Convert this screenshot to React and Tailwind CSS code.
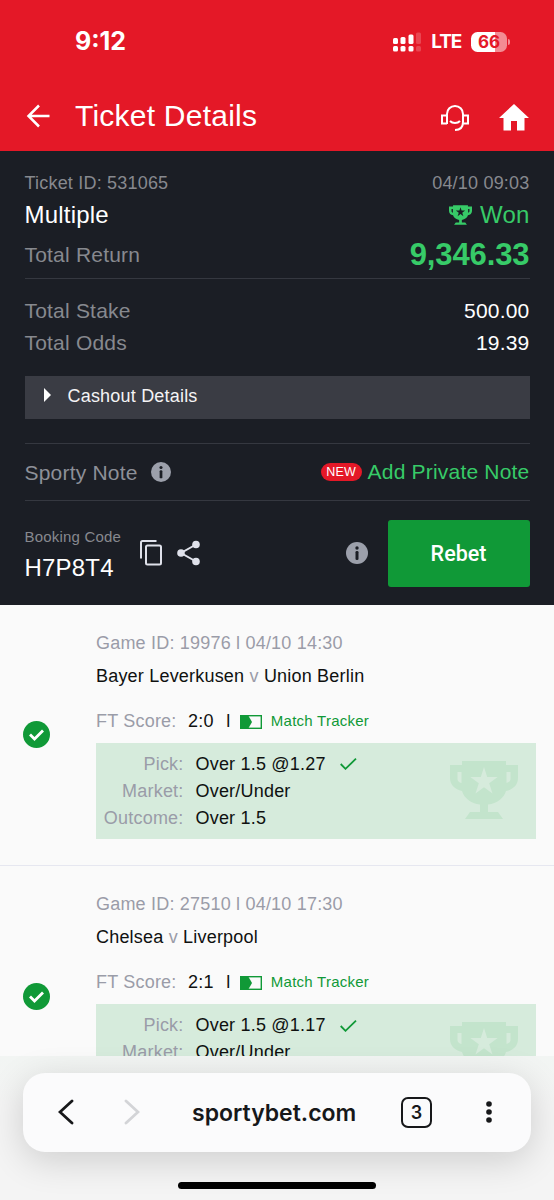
import React from "react";

const matches = [
    { id: "19976", time: "04/10 14:30", home: "Bayer Leverkusen", away: "Union Berlin", score: "2:0", odds: "1.27" },
    { id: "27510", time: "04/10 17:30", home: "Chelsea", away: "Liverpool", score: "2:1", odds: "1.17" },
];

const Trophy = ({ className }) => (
    <svg viewBox="0 0 68 58" className={className} fill="currentColor" fillRule="evenodd">
        <path d="M12 0H56V4H68V17C68 24 63 28.500 56 30C54 37 47 42.500 38 43.500V51H48L53 58H15L20 51H30V43.500C21 42.500 14 37 12 30C5 28.500 0 24 0 17V4H12ZM7.500 11V18C7.500 20 9 21.500 11.500 22V11ZM60.500 11H56.500V22C59 21.500 60.500 20 60.500 18ZM34 6L30.800 16H20.300L28.800 22.300L25.500 32.500L34 26.200L42.500 32.500L39.200 22.300L47.700 16H37.200Z" />
    </svg>
);

const InfoIcon = ({ className }) => (
    <svg viewBox="0 0 22 22" className={className}>
        <circle cx="11" cy="11" r="11" fill="#9ca0ab" />
        <rect x="9.500" y="9" width="3" height="9" rx="1.300" fill="#1b1e25" />
        <circle cx="11" cy="6" r="1.700" fill="#1b1e25" />
    </svg>
);

const StatusBar = () => (
    <div className="flex h-[83px] items-center pl-[75px] pr-[44px] font-['Inter'] text-white">
        <span className="text-[25px] font-bold leading-none">9:12</span>
        <svg viewBox="0 0 28 20" className="ml-auto h-[20px] w-[28px]" fill="#fff">
            <rect x="0" y="6" width="5" height="6" rx="1.500" />
            <rect x="7.500" y="5" width="5" height="7" rx="1.500" />
            <rect x="15.500" y="2.500" width="5" height="9.500" rx="1.500" />
            <rect x="23" y="0.500" width="5" height="11.500" rx="1.500" opacity="0.2" />
            <rect x="0" y="14" width="5" height="5.500" rx="1.500" />
            <rect x="7.500" y="14" width="5" height="5.500" rx="1.500" />
            <rect x="15.500" y="14" width="5" height="5.500" rx="1.500" />
            <rect x="23" y="14" width="5" height="5.500" rx="1.500" opacity="0.2" />
        </svg>
        <span className="ml-[10px] text-[19px] font-bold leading-none tracking-[-1.200px]">LTE</span>
        <div className="ml-[10px] flex items-center">
            <div className="flex h-[20px] w-[36px] items-center justify-center rounded-[6.500px] bg-[linear-gradient(90deg,#fff_68%,#f38c93_68%)] pt-px text-[17px] font-bold leading-none text-[#e41827]">
                66
            </div>
            <div className="ml-px h-[6px] w-[2px] rounded-r-full bg-[#f38c93]" />
        </div>
    </div>
);

const Header = () => (
    <header className="h-[151px] bg-[#e41827]">
        <StatusBar />
        <div className="flex h-[66px] items-center pl-[26px] pr-[25px] text-white">
            <svg viewBox="0 0 24 24" className="h-[24px] w-[24px]" fill="none" stroke="#fff" strokeWidth="2.500">
                <path d="M23.500 12H2.500M13 1.500L2.500 12L13 22.500" />
            </svg>
            <h1 className="ml-[25px] text-[30px] leading-none tracking-[0.230px]">Ticket Details</h1>
            <svg viewBox="0 0 28 28" className="mt-[4px] ml-auto h-[28px] w-[28px]" fill="none" stroke="#fff" strokeWidth="2">
                <path d="M6 20V10C6 5.500 9.500 2 14 2S22 5.500 22 10V18C22 23 19 26 14 26" />
                <path d="M6 11.500H1V19.500H6M22 11.500H27V19.500H22M9 17C11.500 19.700 16.500 19.700 19 17" />
            </svg>
            <svg viewBox="0 0 30 27" className="mt-[2px] ml-[30px] h-[27px] w-[30px]" fill="#fff">
                <path d="M15 0L30 14H25.500V26.500H18V17H12V26.500H4.500V14H0Z" />
            </svg>
        </div>
    </header>
);

const TicketSummary = () => (
    <section className="h-[453.500px] bg-[#1b1e25] px-[24.500px] pt-[20px] tracking-[0.200px] text-[#87898f]">
        <div className="flex h-[24px] items-center justify-between text-[18px]">
            <span>Ticket ID: 531065</span>
            <span>04/10 09:03</span>
        </div>
        <div className="flex h-[39px] items-center justify-between text-[24px]">
            <span className="text-white">Multiple</span>
            <span className="flex items-center gap-[8px] text-[#37cb68]">
                <Trophy className="h-[20px] w-[23px]" />
                Won
            </span>
        </div>
        <div className="flex h-[45px] items-center justify-between border-b border-[#353840] pb-[2px] text-[21px]">
            <span>Total Return</span>
            <span className="text-[31px] font-bold tracking-[-0.100px] text-[#37cb68]">9,346.33</span>
        </div>
        <div className="mt-[16px] flex h-[32px] items-center justify-between text-[21px]">
            <span>Total Stake</span>
            <span className="text-white">500.00</span>
        </div>
        <div className="flex h-[32px] items-center justify-between text-[21px]">
            <span>Total Odds</span>
            <span className="text-white">19.39</span>
        </div>
        <div className="mt-[17px] flex h-[43px] items-center bg-[#3a3c44] pb-[3px] pl-[19px] text-[18px] text-[#f4f4f5]">
            <svg viewBox="0 0 7 14" className="mb-[2px] h-[14px] w-[7px]" fill="#fff">
                <path d="M0 0L7 7L0 14Z" />
            </svg>
            <span className="ml-[17px]">Cashout Details</span>
        </div>
        <div className="mt-[24px] flex h-[58px] items-center border-y border-[#353840] text-[21px]">
            <span className="pt-px text-[#8d9098]">Sporty Note</span>
            <InfoIcon className="ml-[13px] h-[20px] w-[20px]" />
            <span className="ml-auto flex h-[18px] w-[41px] items-center justify-center rounded-full bg-[#e41827] text-[12.500px] text-white">NEW</span>
            <span className="ml-[6px] text-[#37cb68]">Add Private Note</span>
        </div>
        <div className="flex items-center pt-[18.500px]">
            <div className="flex w-[115.500px] flex-col">
                <span className="h-[30px] text-[15px] leading-[30px]">Booking Code</span>
                <span className="h-[32px] text-[24px] leading-[32px] text-white">H7P8T4</span>
            </div>
            <svg viewBox="0 0 22 26" className="h-[26px] w-[22px]" fill="none" stroke="#dfe1ea" strokeWidth="2">
                <path d="M1 18.500V2.500Q1 1 2.500 1H16.500" />
                <rect x="6" y="5.500" width="15" height="19" rx="1.500" />
            </svg>
            <svg viewBox="0 0 23 26" className="ml-[15px] h-[26px] w-[23px]" fill="#dfe1ea">
                <path d="M19 4.500L4 13L19 21.500" fill="none" stroke="#dfe1ea" strokeWidth="2" />
                <circle cx="19" cy="4.500" r="3.800" />
                <circle cx="4" cy="13" r="3.800" />
                <circle cx="19" cy="21.500" r="3.800" />
            </svg>
            <InfoIcon className="ml-auto h-[22px] w-[22px]" />
            <button className="ml-[20px] h-[67px] w-[142px] rounded-[3px] bg-[#109937] pt-[2px] font-['Roboto'] text-[21.500px] font-medium tracking-normal text-white">Rebet</button>
        </div>
    </section>
);

const PickRow = ({ label, children }) => (
    <div className="flex h-[27px] items-center">
        <span className="w-[87.500px] text-right text-[#9a9ca8]">{label}:</span>
        <span className="ml-[12px] flex items-center text-[#0f1110]">{children}</span>
    </div>
);

const MatchCard = ({ match }) => (
    <article className="flex h-[261.500px] items-center border-b border-[#e6e7f0] pl-[23px] pr-[18px] text-[18px] tracking-[0.200px]">
        <svg viewBox="0 0 27 27" className="h-[27px] w-[27px] shrink-0">
            <circle cx="13.500" cy="13.500" r="13.500" fill="#109937" />
            <path d="M7 13.500L11.500 18L20 9.500" fill="none" stroke="#fff" strokeWidth="2.800" />
        </svg>
        <div className="ml-[46px] h-full grow pt-[25px]">
            <div className="h-[26px] leading-[26px] text-[#9a9ca8]">
                Game ID: {match.id} l {match.time}
            </div>
            <div className="mt-[7px] h-[26px] leading-[26px] text-[#0f1110]">
                {match.home} <span className="text-[#9a9ca8]">v</span> {match.away}
            </div>
            <div className="mt-[19.500px] flex h-[26px] items-center text-[#0f1110]">
                <span className="text-[#9a9ca8]">FT Score:</span>
                <span className="ml-[11.500px]">{match.score}</span>
                <span className="ml-[12.500px]">l</span>
                <svg viewBox="0 0 22 14" className="mt-px ml-[9.500px] h-[14px] w-[22px]">
                    <rect x="0.700" y="0.700" width="20.600" height="12.600" fill="none" stroke="#109937" strokeWidth="1.400" />
                    <path d="M0 0H8L12 7L8 14H0Z" fill="#109937" />
                </svg>
                <span className="ml-[9px] text-[15px] tracking-[0.250px] text-[#109937]">Match Tracker</span>
            </div>
            <div className="mt-[8.500px] flex h-[96px] items-start justify-between bg-[#d6ebdc] pr-[18px] pt-[8px]">
                <div>
                    <PickRow label="Pick">
                        Over 1.5 @{match.odds}
                        <svg viewBox="0 0 17 12" className="ml-[14px] h-[12px] w-[17px]" fill="none" stroke="#109937" strokeWidth="1.800">
                            <path d="M0.700 6L5.500 10.800L16 0.700" />
                        </svg>
                    </PickRow>
                    <PickRow label="Market">Over/Under</PickRow>
                    <PickRow label="Outcome">Over 1.5</PickRow>
                </div>
                <Trophy className="mt-[10px] h-[58px] w-[68px] text-[#c3e4cc]" />
            </div>
        </div>
    </article>
);

const BrowserBar = () => (
    <footer className="absolute inset-x-0 bottom-0 h-[144px] bg-[linear-gradient(180deg,#f2f5f3,#f4f4f4_35%)] pt-[17px]">
        <div className="mx-[23px] flex h-[79px] items-center rounded-[22px] bg-[#fbfbfc] pb-[1px] pl-[35px] pr-[39px] font-['Inter'] text-[#17181a] shadow-[0_8px_36px_rgba(0,0,0,0.16)]">
            <svg viewBox="0 0 16 26" className="h-[26px] w-[16px]" fill="none" stroke="#17181a" strokeWidth="2.800" strokeLinecap="round">
                <path d="M14 2L2 13L14 24" />
            </svg>
            <svg viewBox="0 0 16 26" className="ml-[50px] h-[26px] w-[16px]" fill="none" stroke="#d3d4d7" strokeWidth="2.800" strokeLinecap="round">
                <path d="M2 2L14 13L2 24" />
            </svg>
            <span className="ml-[52px] pt-[2px] text-[23px] font-semibold leading-none">sportybet.com</span>
            <span className="ml-auto flex h-[31px] w-[31px] items-center justify-center rounded-[7px] border-[2.500px] border-[#17181a] pt-[2px] text-[18px] font-semibold leading-none">3</span>
            <svg viewBox="0 0 6 22" className="ml-[54px] h-[22px] w-[6px]" fill="#17181a">
                <circle cx="3" cy="3" r="2.800" />
                <circle cx="3" cy="11" r="2.800" />
                <circle cx="3" cy="19" r="2.800" />
            </svg>
        </div>
        <div className="mx-auto mt-[30px] h-[7px] w-[198px] rounded-full bg-black" />
    </footer>
);

export default function App() {
    return (
        <div className="relative h-[1200px] w-[554px] overflow-hidden bg-[#fafafa] font-['Liberation_Sans',sans-serif]">
            <Header />
            <TicketSummary />
            <main>
                {matches.map((match) => (
                    <MatchCard key={match.id} match={match} />
                ))}
            </main>
            <BrowserBar />
        </div>
    );
}
